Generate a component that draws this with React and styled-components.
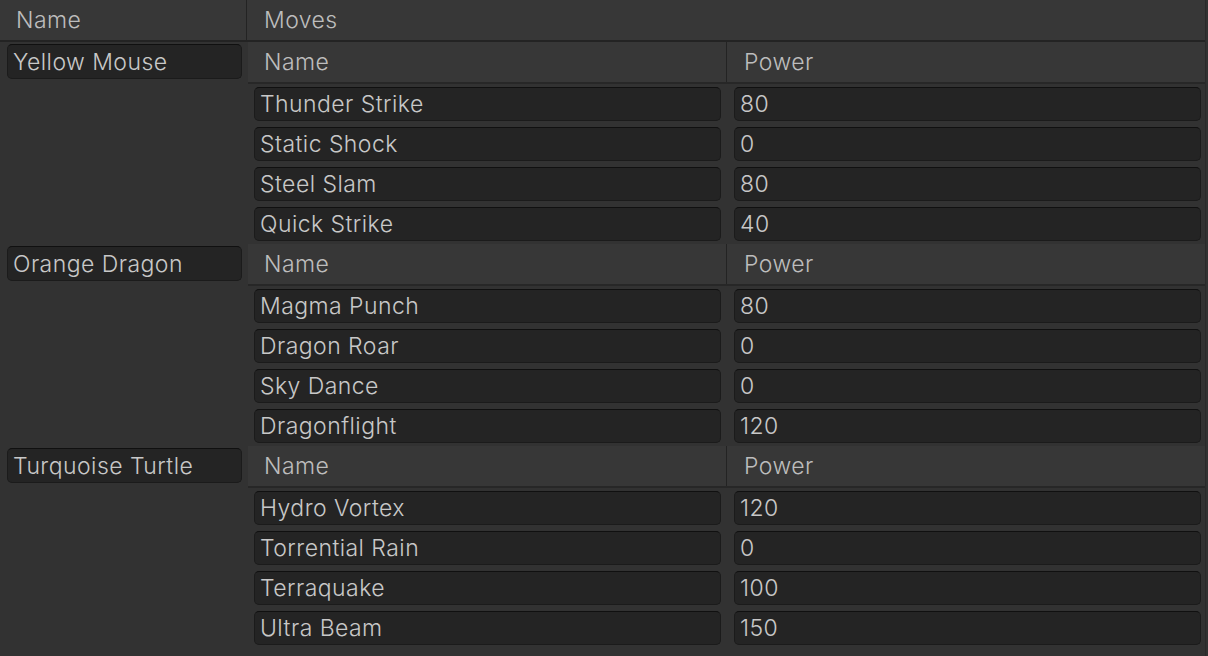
import React from "react";
import styled, { createGlobalStyle } from "styled-components";

const GlobalStyle = createGlobalStyle`
  html, body {
    margin: 0;
    padding: 0;
    background: #323232;
  }
  body {
    font-family: Inter, "Noto Sans", "Liberation Sans", sans-serif;
    font-size: 23px;
    font-weight: 350;
    letter-spacing: 0.45px;
    color: #c4c4c4;
  }
`;

const Table = styled.div`
  width: 1205px;
  height: 656px;
  background: #323232;
  border-right: 1px solid #2a2a2a;
`;

const TopHeader = styled.div`
  display: grid;
  grid-template-columns: 247px 1fr;
  height: 40px;
  background: #373737;
  border-bottom: 2px solid #232323;
`;

const HeaderCell = styled.div`
  display: flex;
  align-items: center;
  padding-left: ${p => p.pad}px;
  color: #bdbdbd;
  border-right: ${p => (p.divider ? "1px solid #232323" : "none")};
  overflow: hidden;
  white-space: nowrap;
`;

const Group = styled.div`
  display: grid;
  grid-template-columns: 248px 1fr;
`;

const LeftCell = styled.div`
  padding: 2px 6px 0 7px;
`;

const Field = styled.div`
  box-sizing: border-box;
  height: ${p => p.h || 34}px;
  display: flex;
  align-items: center;
  padding-left: 5px;
  background: #242424;
  border: 1px solid #1b1b1b;
  border-top-color: #101010;
  border-radius: 5px;
  color: #c8c8c8;
  white-space: nowrap;
  overflow: hidden;
`;

const Moves = styled.div`
  display: flex;
  flex-direction: column;
`;

const InnerHeader = styled.div`
  display: grid;
  grid-template-columns: 479px 1fr;
  height: 40px;
  background: #373737;
  border-bottom: 2px solid #272727;
`;

const MoveRow = styled.div`
  display: grid;
  grid-template-columns: 478px 1fr;
  height: 40px;
  box-sizing: border-box;
  padding: 3px 0;
`;

const MoveCell = styled.div`
  padding: 0 ${p => p.right}px 0 ${p => p.left}px;
`;

const data = [
  {
    name: "Yellow Mouse",
    moves: [
      ["Thunder Strike", 80],
      ["Static Shock", 0],
      ["Steel Slam", 80],
      ["Quick Strike", 40],
    ],
  },
  {
    name: "Orange Dragon",
    moves: [
      ["Magma Punch", 80],
      ["Dragon Roar", 0],
      ["Sky Dance", 0],
      ["Dragonflight", 120],
    ],
  },
  {
    name: "Turquoise Turtle",
    moves: [
      ["Hydro Vortex", 120],
      ["Torrential Rain", 0],
      ["Terraquake", 100],
      ["Ultra Beam", 150],
    ],
  },
];

const App = () => {
  return (
    <>
      <GlobalStyle />
      <Table>
        <TopHeader>
          <HeaderCell pad={16} divider>Name</HeaderCell>
          <HeaderCell pad={17}>Moves</HeaderCell>
        </TopHeader>
        {data.map(g => (
          <Group key={g.name}>
            <LeftCell>
              <Field h={35}>{g.name}</Field>
            </LeftCell>
            <Moves>
              <InnerHeader>
                <HeaderCell pad={16} divider>Name</HeaderCell>
                <HeaderCell pad={17}>Power</HeaderCell>
              </InnerHeader>
              {g.moves.map(([move, power]) => (
                <MoveRow key={move}>
                  <MoveCell left={6} right={5}>
                    <Field>{move}</Field>
                  </MoveCell>
                  <MoveCell left={8} right={4}>
                    <Field>{power}</Field>
                  </MoveCell>
                </MoveRow>
              ))}
            </Moves>
          </Group>
        ))}
      </Table>
    </>
  );
};

export default App;
